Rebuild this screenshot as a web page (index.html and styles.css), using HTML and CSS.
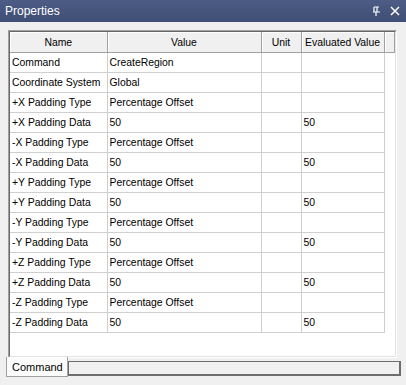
FILE: index.html
```html
<!DOCTYPE html>
<html lang="en">
<head>
  <meta charset="UTF-8">
  <title>Properties</title>
  <link rel="stylesheet" href="styles.css">
</head>
<body>

  <div class="titlebar">
    <span class="title">Properties</span>
    <span class="btns">
      <svg width="10" height="10" viewBox="0 0 10 10"><path d="M3 1h5M3 1v5M6 1v5M2 6h7M5 6v4" stroke="#fff" stroke-width="1.2" fill="none"/></svg>
      <svg width="10" height="10" viewBox="0 0 10 10"><path d="M1 1l8 8M9 1l-8 8" stroke="#fff" stroke-width="1.5" fill="none"/></svg>
    </span>
  </div>

  <div class="panel">
    <div class="inner">
      <table class="grid">
        <colgroup>
          <col style="width:97px"><col style="width:154px"><col style="width:40px"><col style="width:83px"><col>
        </colgroup>
        <thead>
          <tr><th>Name</th><th>Value</th><th>Unit</th><th>Evaluated Value</th><th></th></tr>
        </thead>
        <tbody>
          <tr><td>Command</td><td>CreateRegion</td><td></td><td></td><td class="gap"></td></tr>
          <tr><td>Coordinate System</td><td>Global</td><td></td><td></td><td class="gap"></td></tr>
          <tr><td>+X Padding Type</td><td>Percentage Offset</td><td></td><td></td><td class="gap"></td></tr>
          <tr><td>+X Padding Data</td><td>50</td><td></td><td>50</td><td class="gap"></td></tr>
          <tr><td>-X Padding Type</td><td>Percentage Offset</td><td></td><td></td><td class="gap"></td></tr>
          <tr><td>-X Padding Data</td><td>50</td><td></td><td>50</td><td class="gap"></td></tr>
          <tr><td>+Y Padding Type</td><td>Percentage Offset</td><td></td><td></td><td class="gap"></td></tr>
          <tr><td>+Y Padding Data</td><td>50</td><td></td><td>50</td><td class="gap"></td></tr>
          <tr><td>-Y Padding Type</td><td>Percentage Offset</td><td></td><td></td><td class="gap"></td></tr>
          <tr><td>-Y Padding Data</td><td>50</td><td></td><td>50</td><td class="gap"></td></tr>
          <tr><td>+Z Padding Type</td><td>Percentage Offset</td><td></td><td></td><td class="gap"></td></tr>
          <tr><td>+Z Padding Data</td><td>50</td><td></td><td>50</td><td class="gap"></td></tr>
          <tr><td>-Z Padding Type</td><td>Percentage Offset</td><td></td><td></td><td class="gap"></td></tr>
          <tr><td>-Z Padding Data</td><td>50</td><td></td><td>50</td><td class="gap"></td></tr>
        </tbody>
      </table>
    </div>
  </div>

  <div class="tabs">
    <div class="tab">Command</div>
    <div class="strip"></div>
  </div>

</body>
</html>
```

FILE: styles.css
```css
body {
  margin: 0;
  background-color: #f0f0f0;
  font-family: "Liberation Sans", Arial, sans-serif;
  font-size: 10.4px;
  color: #000;
}
.titlebar {
  height: 22px;
  display: flex;
  align-items: center;
  justify-content: space-between;
  padding: 0 6px 0 5px;
  background: linear-gradient(#4c5c85, #3e4e74);
  color: #fff;
  font-size: 12px;
  box-sizing: border-box;
}
.btns {
  display: flex;
  gap: 9px;
  align-items: center;
}
.panel {
  margin: 8px 9px 0 8px;
  height: 328px;
  box-sizing: border-box;
  border: 1px solid;
  border-color: #a0a0a0 #ffffff #ffffff #a0a0a0;
}
.inner {
  height: 100%;
  box-sizing: border-box;
  background: #fff;
  border: 1px solid;
  border-color: #696969 #e3e3e3 #e3e3e3 #696969;
}
.grid {
  border-collapse: collapse;
  table-layout: fixed;
  width: 100%;
}
.grid th {
  height: 20px;
  padding: 0;
  font-weight: normal;
  background: #f0f0f0;
  border-right: 1px solid #a0a0a0;
  border-bottom: 1px solid #a0a0a0;
  box-shadow: inset 1px 1px #fff;
}
.grid td {
  height: 19px;
  padding: 0 2px;
  border: 1px solid #cfcfcf;
  white-space: nowrap;
  overflow: hidden;
}
.grid td:first-child {
  border-left: none;
}
.grid td.gap {
  border: none;
}
.tabs {
  display: flex;
  align-items: flex-start;
  padding: 0 5px 0 6px;
}
.tab {
  margin-top: -1px;
  padding: 4px 4px 3px 5px;
  background: #fcfcfc;
  border: 1px solid #a0a0a0;
  border-top: none;
  font-size: 11px;
}
.strip {
  flex: 1;
  height: 12px;
  margin-top: 3px;
  background: #f0f0f0;
  border: 1px solid #6d6d6d;
  border-right-width: 2px;
  border-bottom-width: 2px;
}
```
